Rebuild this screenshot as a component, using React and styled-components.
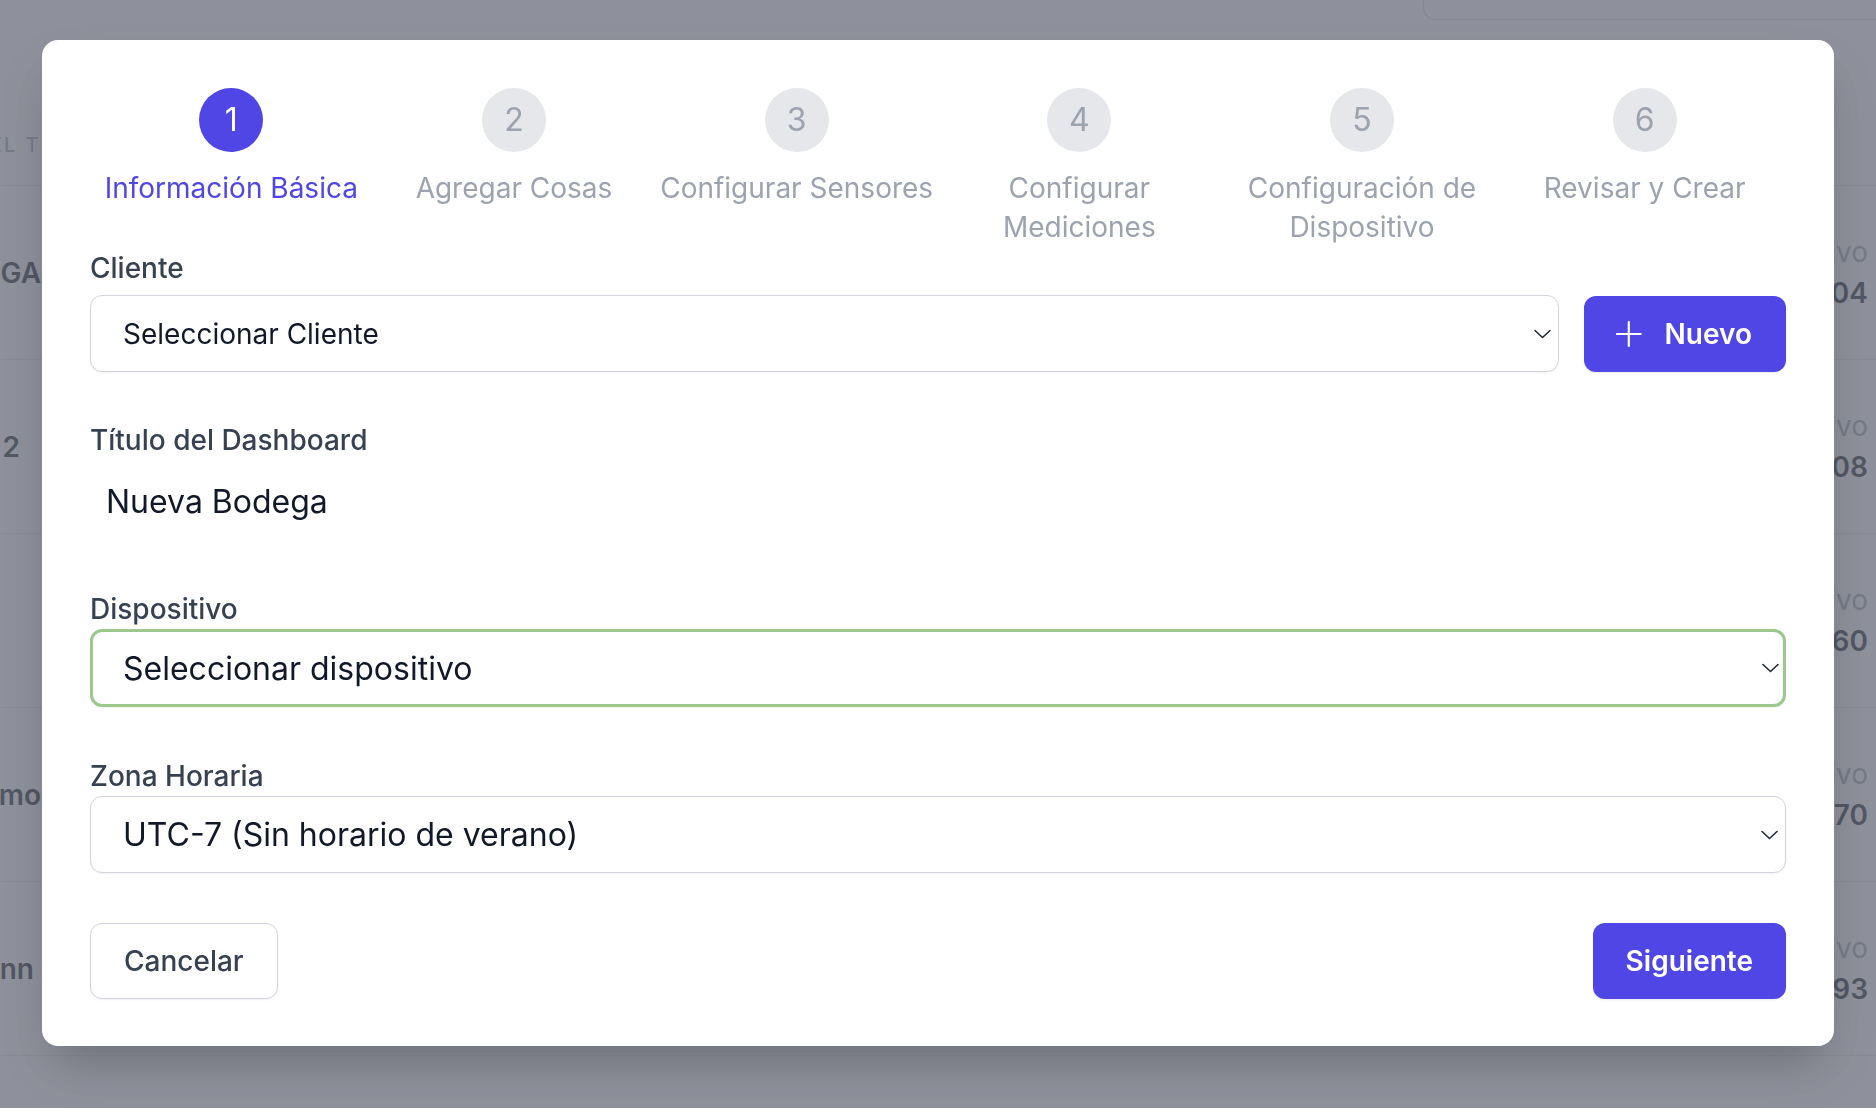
import React from 'react';
import styled, { createGlobalStyle } from 'styled-components';

const GlobalStyle = createGlobalStyle`
  html, body {
    margin: 0;
    padding: 0;
  }

  body {
    font-family: Inter, 'Noto Sans', 'Liberation Sans', sans-serif;
    background: #ffffff;
    overflow: hidden;
  }

  * {
    box-sizing: border-box;
  }
`;

const steps = [
  'Información Básica',
  'Agregar Cosas',
  'Configurar Sensores',
  'Configurar Mediciones',
  'Configuración de Dispositivo',
  'Revisar y Crear',
];

const rows = [
  { name: 'BODEGA', status: 'Activo', id: '1004' },
  { name: 'Bodega 2\u00a0\u00a0\u00a0', status: 'Activo', id: '1008' },
  { name: '', status: 'Activo', id: '1060' },
  { name: 'Almacén Primo', status: 'Activo', id: '1070' },
  { name: 'Planta Glenn\u00a0', status: 'Activo', id: '1093' },
  { name: '', status: '', id: '' },
];

const Chevron = () => (
  <svg width='17' height='10' viewBox='0 0 17 10' fill='none'>
    <path
      d='M1 1.5l7.5 7 7.5-7'
      stroke='#1f2937'
      strokeWidth='1.6'
      strokeLinecap='round'
      strokeLinejoin='round'
    />
  </svg>
);

const PlusIcon = () => (
  <svg width='28' height='28' viewBox='0 0 28 28' fill='none'>
    <path d='M14 1v26M1 14h26' stroke='#fff' strokeWidth='2.4' strokeLinecap='round' />
  </svg>
);

const App = () => {
  return (
    <>
      <GlobalStyle />
      <Page>
        <TopBar>
          <SearchBox />
        </TopBar>
        <TableHead>
          <LeftCell $head>DEL T</LeftCell>
          <span />
          <span />
        </TableHead>
        {rows.map((row, i) => (
          <TableRow key={i}>
            <LeftCell>{row.name}</LeftCell>
            <span />
            <RightCell>
              <Status>{row.status}</Status>
              <DeviceId>{row.id}</DeviceId>
            </RightCell>
          </TableRow>
        ))}
      </Page>

      <Overlay>
        <Modal>
          <Steps>
            {steps.map((label, i) => (
              <Step key={label}>
                <StepCircle $active={i === 0}>{i + 1}</StepCircle>
                <StepLabel $active={i === 0}>{label}</StepLabel>
              </Step>
            ))}
          </Steps>

          <Field>
            <Label $gap={9}>Cliente</Label>
            <ClientRow>
              <SelectBox $grow $size={28}>
                <span>Seleccionar Cliente</span>
                <Chevron />
              </SelectBox>
              <NewButton>
                <PlusIcon />
                Nuevo
              </NewButton>
            </ClientRow>
          </Field>

          <Field $top={50}>
            <Label>Título del Dashboard</Label>
            <TitleInput defaultValue='Nueva Bodega' />
          </Field>

          <Field $top={58}>
            <Label $gap={2}>Dispositivo</Label>
            <SelectBox $focused $size={32}>
              <span>Seleccionar dispositivo</span>
              <Chevron />
            </SelectBox>
          </Field>

          <Field $top={51}>
            <Label $gap={2}>Zona Horaria</Label>
            <SelectBox $size={32}>
              <span>UTC-7 (Sin horario de verano)</span>
              <Chevron />
            </SelectBox>
          </Field>

          <Footer>
            <GhostButton>Cancelar</GhostButton>
            <PrimaryButton>Siguiente</PrimaryButton>
          </Footer>
        </Modal>
      </Overlay>
    </>
  );
};

/* background page */

const Page = styled.div`
  width: 1876px;
  height: 1108px;
  overflow: hidden;
  background: #fff;
`;

const TopBar = styled.div`
  display: flex;
  justify-content: flex-end;
  height: 48px;
  margin-top: -28px;
`;

const SearchBox = styled.div`
  width: 470px;
  height: 48px;
  margin-right: -17px;
  border: 1px solid #d1d5db;
  border-radius: 12px;
`;

const TableHead = styled.div`
  display: grid;
  grid-template-columns: 41px 1fr 42px;
  height: 80px;
  margin-top: 85px;
`;

const TableRow = styled.div`
  display: grid;
  grid-template-columns: 41px 1fr 42px;
  height: 174px;
  border-top: 1px solid #e5e7eb;
`;

const LeftCell = styled.div`
  display: flex;
  justify-content: flex-end;
  align-items: center;
  overflow: hidden;
  white-space: pre;
  font-size: ${(p) => (p.$head ? '20px' : '28px')};
  font-weight: ${(p) => (p.$head ? 500 : 600)};
  letter-spacing: ${(p) => (p.$head ? '0.12em' : '0')};
  color: ${(p) => (p.$head ? '#9ca3af' : '#111827')};
`;

const RightCell = styled.div`
  display: flex;
  flex-direction: column;
  align-items: flex-end;
  justify-content: center;
  overflow: hidden;
  padding-right: 8px;
  white-space: nowrap;
  font-size: 28px;
  line-height: 41px;
`;

const Status = styled.span`
  color: #9ca3af;
`;

const DeviceId = styled.span`
  color: #111827;
  font-weight: 600;
`;

/* modal */

const Overlay = styled.div`
  position: fixed;
  inset: 0;
  padding-top: 40px;
  background: rgba(104, 108, 121, 0.75);
`;

const Modal = styled.div`
  width: 1792px;
  margin: 0 auto;
  padding: 48px 48px 47px;
  background: #fff;
  border-radius: 16px;
  box-shadow: 0 25px 50px -12px rgba(0, 0, 0, 0.25);
`;

const Steps = styled.div`
  display: grid;
  grid-template-columns: repeat(6, 1fr);
  margin-bottom: 3px;
`;

const Step = styled.div`
  display: flex;
  flex-direction: column;
  align-items: center;
`;

const StepCircle = styled.div`
  display: flex;
  align-items: center;
  justify-content: center;
  width: 64px;
  height: 64px;
  margin-bottom: 17px;
  border-radius: 50%;
  font-size: 32px;
  line-height: 1;
  background: ${(p) => (p.$active ? '#4f46e5' : '#e5e7eb')};
  color: ${(p) => (p.$active ? '#ffffff' : '#9ca3af')};
`;

const StepLabel = styled.div`
  font-size: 28px;
  line-height: 39px;
  text-align: center;
  color: ${(p) => (p.$active ? '#4f46e5' : '#9ca3af')};
`;

const Field = styled.div`
  display: flex;
  flex-direction: column;
  margin-top: ${(p) => p.$top || 0}px;
`;

const Label = styled.label`
  margin-bottom: ${(p) => p.$gap || 0}px;
  font-size: 28px;
  font-weight: 500;
  line-height: 36px;
  color: #374151;
`;

const ClientRow = styled.div`
  display: flex;
  align-items: center;
  gap: 25px;
`;

const SelectBox = styled.div`
  flex: ${(p) => (p.$grow ? '1 1 auto' : 'none')};
  display: flex;
  align-items: center;
  justify-content: space-between;
  height: ${(p) => (p.$focused ? 78 : 77)}px;
  padding: ${(p) => (p.$focused ? '0 4px 0 30px' : '0 7px 0 32px')};
  border: ${(p) => (p.$focused ? '3px solid #9dc88d' : '1px solid #d1d5db')};
  border-radius: 12px;
  background: #fff;
  box-shadow: 0 1px 2px rgba(0, 0, 0, 0.05);
  font-size: ${(p) => p.$size}px;
  color: #111827;
`;

const TitleInput = styled.input`
  width: 100%;
  height: 64px;
  margin-top: 11px;
  padding: 0 0 0 16px;
  border: none;
  outline: none;
  background: transparent;
  font-family: inherit;
  font-size: 32px;
  color: #111827;
`;

const Button = styled.button`
  display: flex;
  align-items: center;
  justify-content: center;
  height: 76px;
  padding: 0 33px;
  border-radius: 12px;
  font-family: inherit;
  font-size: 28px;
  cursor: pointer;
`;

const PrimaryButton = styled(Button)`
  border: none;
  background: #4f46e5;
  color: #fff;
  font-weight: 600;
  box-shadow: 0 1px 2px rgba(0, 0, 0, 0.08);
`;

const NewButton = styled(PrimaryButton)`
  width: 202px;
  gap: 23px;
  padding: 0 34px 0 32px;
`;

const GhostButton = styled(Button)`
  border: 1px solid #d1d5db;
  background: #fff;
  color: #374151;
  font-weight: 500;
  box-shadow: 0 1px 2px rgba(0, 0, 0, 0.05);
`;

const Footer = styled.div`
  display: flex;
  justify-content: space-between;
  margin-top: 50px;
`;

export default App;
